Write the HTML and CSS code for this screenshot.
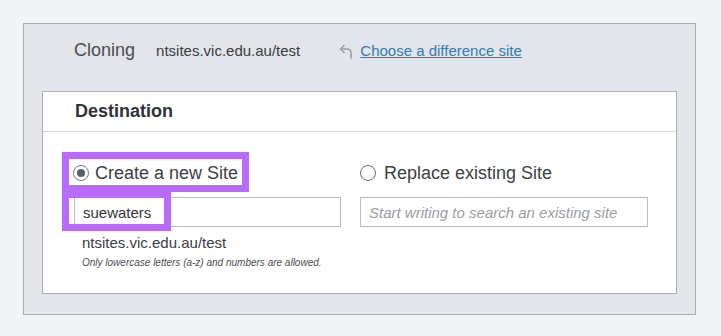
FILE: index.html
```html
<!DOCTYPE html>
<html>
<head>
<meta charset="utf-8">
<link rel="stylesheet" href="styles.css">
</head>
<body>
<div class="panel">
  <div class="head">
    <span class="cloning">Cloning</span>
    <span class="source">ntsites.vic.edu.au/test</span>
    <svg class="undo" width="14" height="16" viewBox="0 0 14 16"><path d="M5 2.5 L1.5 6 L5 9.5" fill="none" stroke="#9ba1a9" stroke-width="1.6" stroke-linecap="round" stroke-linejoin="round"/><path d="M1.8 6 H8 a4 4 0 0 1 4 4 V15" fill="none" stroke="#9ba1a9" stroke-width="1.6" stroke-linecap="round"/></svg>
    <a class="link" href="#">Choose a difference site</a>
  </div>
  <div class="card">
    <div class="card-head">Destination</div>
    <div class="card-body">
      <div class="col col-left">
        <label class="option"><span class="radio checked"></span>Create a new Site</label>
        <div class="input">suewaters</div>
        <div class="url">ntsites.vic.edu.au/test</div>
        <div class="hint">Only lowercase letters (a-z) and numbers are allowed.</div>
      </div>
      <div class="col col-right">
        <label class="option"><span class="radio"></span>Replace existing Site</label>
        <div class="input placeholder">Start writing to search an existing site</div>
      </div>
      <div class="mark mark-1"></div>
      <div class="mark mark-2"></div>
    </div>
  </div>
</div>
</body>
</html>
```

FILE: styles.css
```css
* { box-sizing: border-box; }
body {
  margin: 0;
  padding: 23px;
  background: #f2f3f6;
  font-family: "Liberation Sans", Arial, sans-serif;
  color: #3a3d41;
}
.panel {
  width: 673px;
  height: 292px;
  border: 1px solid #a9aeb6;
  background: #e4e5ea;
  padding: 0 18px;
}
.head {
  height: 52px;
  display: flex;
  align-items: center;
  padding-left: 32px;
}
.cloning {
  font-size: 18px;
  color: #4a4d52;
  margin-right: 21px;
}
.source {
  font-size: 15px;
  color: #3a3d41;
  margin-right: 39px;
}
.undo {
  display: block;
  margin-right: 7px;
  margin-top: 2px;
}
.link {
  font-size: 15px;
  color: #2d7db6;
  text-decoration: underline;
}
.card {
  margin-top: 15px;
  height: 203px;
  border: 1px solid #aab0b8;
  background: #fff;
}
.card-head {
  height: 40px;
  border-bottom: 1px solid #d3d6db;
  padding-left: 32px;
  display: flex;
  align-items: center;
  font-size: 18px;
  font-weight: bold;
  color: #2f3236;
}
.card-body {
  position: relative;
  display: flex;
  gap: 20px;
  padding: 28px 0 0 31px;
}
.col-left { width: 266px; }
.col-right { width: 288px; }
.option {
  height: 26px;
  display: flex;
  align-items: center;
  font-size: 18px;
  color: #3d4044;
}
.radio {
  width: 16px;
  height: 16px;
  border: 1.5px solid #6b6f75;
  border-radius: 50%;
  margin-right: 8px;
  display: flex;
  align-items: center;
  justify-content: center;
}
.radio.checked { border-color: #777b81; margin-right: 6px; }
.radio.checked::after {
  content: "";
  width: 8px;
  height: 8px;
  border-radius: 50%;
  background: #55606b;
}
.col-left .option { margin-left: -1px; }
.input {
  margin-top: 11px;
  height: 30px;
  border: 1px solid #b9bdc3;
  padding-left: 8px;
  display: flex;
  align-items: center;
  font-size: 15px;
  color: #33363a;
}
.col-left .input { width: 267px; }
.placeholder {
  font-style: italic;
  color: #9a9ea4;
}
.url {
  margin-top: 7px;
  padding-left: 8px;
  font-size: 15px;
  line-height: 18px;
  color: #3a3d41;
}
.hint {
  margin-top: 4px;
  padding-left: 8px;
  font-size: 10px;
  line-height: 14px;
  font-style: italic;
  color: #4a4d52;
}
.mark {
  position: absolute;
  border: 7px solid #b86bfc;
}
.mark-1 {
  left: 19px;
  top: 20px;
  width: 187px;
  height: 40px;
}
.mark-2 {
  left: 19px;
  top: 59px;
  width: 109px;
  height: 40px;
}
```
